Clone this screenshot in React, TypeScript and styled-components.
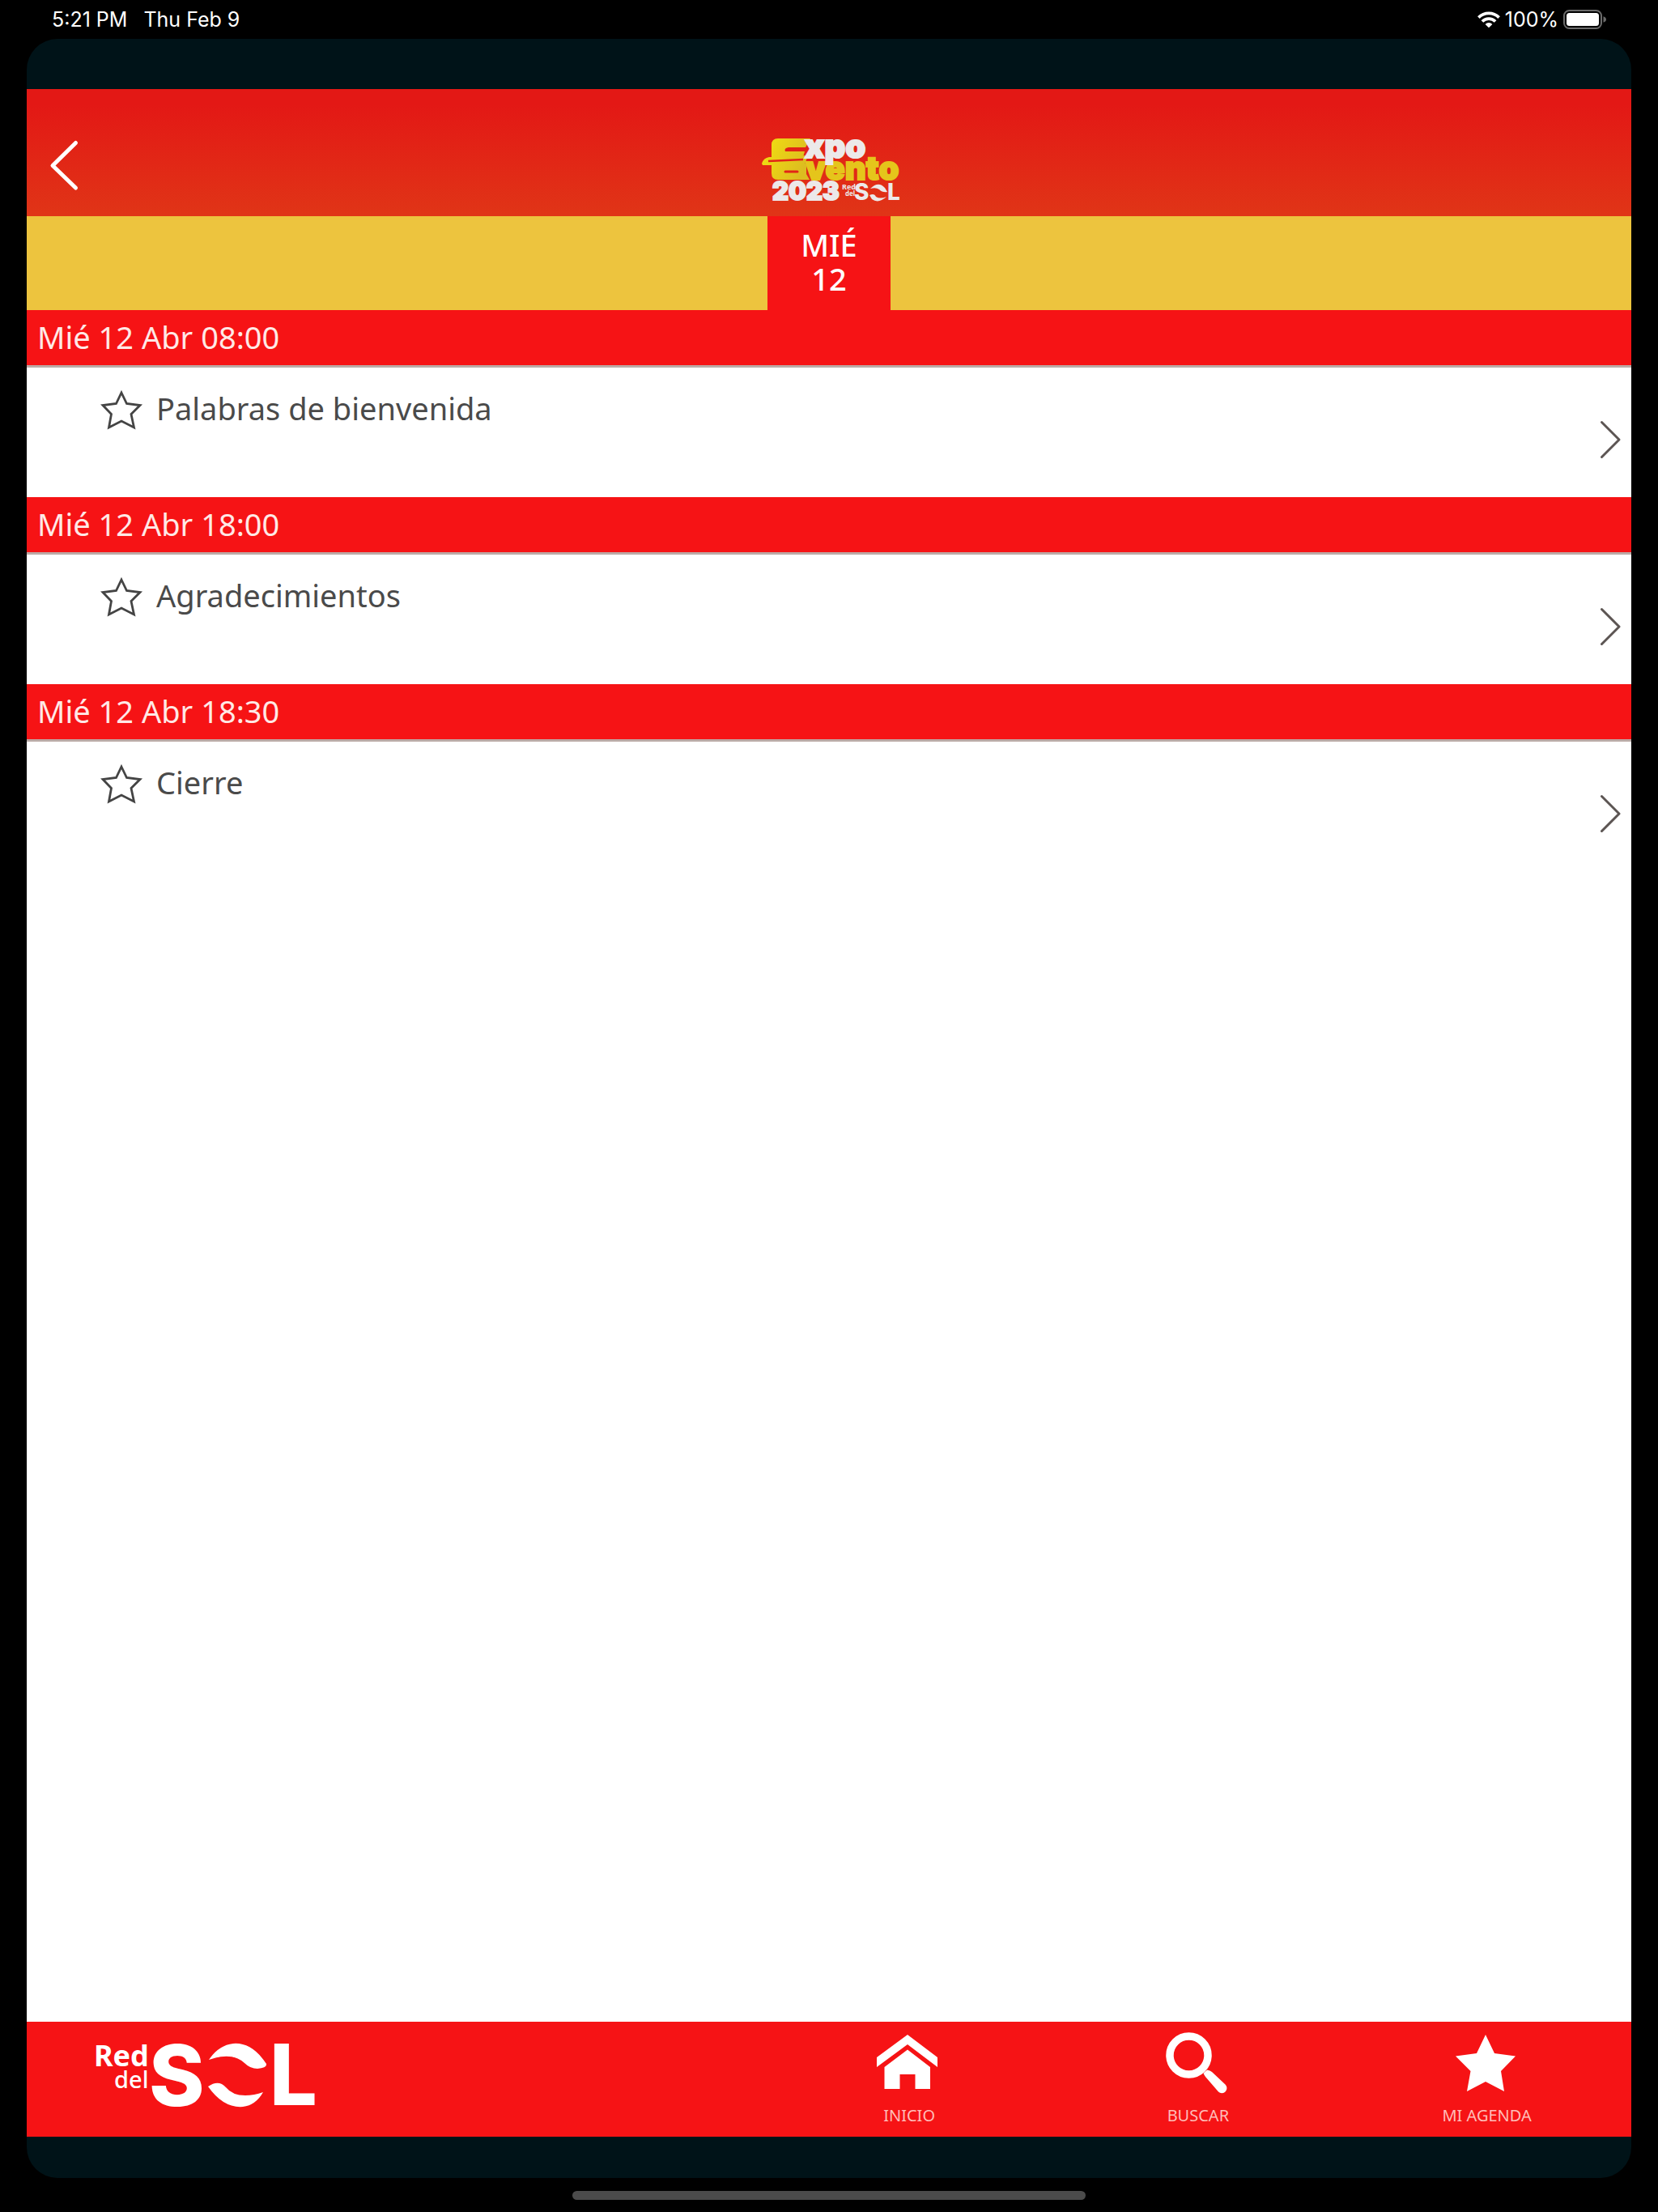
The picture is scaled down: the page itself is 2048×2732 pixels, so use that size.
import React from "react";
import styled, { createGlobalStyle } from "styled-components";

const red = "#f61315";
const textFont = `"Noto Sans", "Open Sans", sans-serif`;

const GlobalStyle = createGlobalStyle`
  * { box-sizing: border-box; }
  body { margin: 0; background: #000; font-family: ${textFont}; }
  a { color: inherit; text-decoration: none; }
  button { border: 0; padding: 0; background: none; color: inherit; font: inherit; cursor: pointer; }
  h2 { margin: 0; }
  svg { display: block; overflow: visible; }
`;

const Screen = styled.div`
  min-height: 100vh;
  display: flex;
  flex-direction: column;
  background: #000;
`;

const StatusBar = styled.div`
  height: 48px;
  padding: 0 64px;
  display: flex;
  align-items: center;
  justify-content: space-between;
  color: #fff;
  font: 400 25px/48px Inter, sans-serif;
`;

const StatusGroup = styled.div<{ $gap: number }>`
  display: flex;
  align-items: center;
  gap: ${(p) => p.$gap}px;
`;

const Panel = styled.div`
  flex: 1;
  margin: 0 33px;
  padding: 62px 0 51px;
  display: flex;
  flex-direction: column;
  border-radius: 38px;
  background: #001318;
`;

const Header = styled.header`
  height: 157px;
  padding: 58px 28px 0;
  display: grid;
  grid-template-columns: 1fr auto 1fr;
  align-items: start;
  background: linear-gradient(#e31815, #e31815 12%, #e03517);
`;

const BackButton = styled.button`
  justify-self: start;
  && {
    padding-top: 5px;
  }
`;

const DayTabs = styled.nav`
  display: flex;
  justify-content: center;
  background: #edc43e;
`;

const DayTab = styled.button`
  && {
    width: 152px;
    height: 116px;
    padding: 14px 0 18px;
    background: ${red};
    color: #fff;
    font-size: 38px;
    line-height: 42px;
    font-weight: 500;
  }
`;

const DayLine = styled.span`
  display: block;
`;

const Agenda = styled.main`
  flex: 1;
  background: #fff;
`;

const SlotTitle = styled.h2`
  height: 71px;
  padding: 0 13px;
  border-bottom: 3px solid #bcaaa6;
  background: ${red};
  color: #ffe9e6;
  font-size: 38px;
  line-height: 66px;
  font-weight: 400;
`;

const SessionRow = styled.div`
  height: 160px;
  padding: 18px 13px 0 92px;
  display: flex;
  align-items: flex-start;
  gap: 18px;
  color: #4a4a4a;
`;

const FavoriteButton = styled.button`
  && {
    padding-top: 10px;
  }
`;

const SessionLink = styled.a`
  flex: 1;
  display: flex;
  justify-content: space-between;
  font-size: 38px;
  line-height: 64px;
  font-weight: 400;
`;

const Chevron = styled.svg`
  margin-top: 46px;
`;

const BottomBar = styled.footer`
  height: 142px;
  display: flex;
  background: ${red};
`;

const Brand = styled.a`
  flex: 1;
  padding: 18px 0 0 77px;
`;

const BottomNav = styled.nav`
  width: 54%;
  display: grid;
  grid-template-columns: repeat(3, 1fr);
`;

const NavLink = styled.a`
  padding-top: 13px;
  display: flex;
  flex-direction: column;
  align-items: center;
  gap: 15px;
  color: #ffbdb8;
  font-size: 20px;
  line-height: 24px;
  font-weight: 400;
`;

const HomeIndicatorArea = styled.div`
  height: 42px;
  padding-top: 16px;
  display: flex;
  justify-content: center;
`;

const HomeIndicator = styled.div`
  width: 31%;
  height: 11px;
  border-radius: 6px;
  background: #4b4b4b;
`;

const WifiIcon = () => (
  <svg width="28" height="21" viewBox="0 0 28 21" fill="none" stroke="#fff" strokeWidth="3.8">
    <path d="M1.4 7.6A18 18 0 0 1 26.6 7.6" />
    <path d="M5.9 12.5A11.6 11.6 0 0 1 22.1 12.5" />
    <path d="M14 20.3L9.6 15.9A6.2 6.2 0 0 1 18.4 15.9Z" fill="#fff" stroke="none" />
  </svg>
);

const BatteryIcon = () => (
  <svg width="53" height="24" viewBox="0 0 53 24">
    <rect x="1" y="1" width="46" height="22" rx="6.5" fill="none" stroke="#6b6b6b" strokeWidth="2" />
    <rect x="4" y="4" width="40" height="16" rx="3.5" fill="#fff" />
    <path d="M49.5 8.2q3.5 1.3 3.5 3.8t-3.5 3.8z" fill="#6b6b6b" />
  </svg>
);

const EventLogo = () => (
  <svg width="180" height="84" viewBox="0 0 180 84" role="img" aria-label="Expo Evento 2023 Red del SOL">
    <defs>
      <linearGradient id="gold" x1="0" y1="0" x2="1" y2="0.4">
        <stop offset="0" stopColor="#f3e010" />
        <stop offset="1" stopColor="#dcbc20" />
      </linearGradient>
    </defs>
    <g fontFamily="Inter, sans-serif" fontWeight="900">
      <text x="61" y="54" fontSize="40" fill="#e5c51b" stroke="#e5c51b" strokeWidth="2">vento</text>
      <path
        fill="url(#gold)"
        d="M19 11Q19 3 27 3H67L61 14H40Q34 15 36 19H60L58 26H19ZM7 34Q9 27 16 26L64 24L60 35L8 36ZM19 34H62V47L66 54H27Q19 54 19 46Z"
      />
      <path d="M15 31L58 29" stroke="#e22417" strokeWidth="2.5" />
      <path d="M36 44H51" stroke="#e22417" strokeWidth="3" strokeLinecap="round" />
      <text x="60" y="27" fontSize="40" fill="#ece9ea" stroke="#ece9ea" strokeWidth="2">xpo</text>
      <text x="20" y="79" fontSize="31" fill="#ece9ea" stroke="#ece9ea" strokeWidth="2">2023</text>
      <text x="121" y="79" fontSize="28" fontWeight="800" fill="#ece9ea">S</text>
      <text x="162" y="79" fontSize="28" fontWeight="800" fill="#ece9ea">L</text>
    </g>
    <g fontFamily={textFont} fontWeight="700" fill="#ece9ea">
      <text x="106" y="66" fontSize="9">Red</text>
      <text x="110" y="74" fontSize="8">del</text>
    </g>
    <path
      fill="#ece9ea"
      d="M141 65Q151 55 159 64L162 69Q156 70 152 66Q148 63 141 65ZM140 73Q146 70 148 75Q153 78 161 75Q151 84 143 78Z"
    />
  </svg>
);

const SolLogo = () => (
  <svg width="290" height="95" viewBox="0 0 290 95" fill="#fff" role="img" aria-label="Red del SOL">
    <g fontFamily={textFont}>
      <text x="6" y="37" fontSize="36" fontWeight="700">Red</text>
      <text x="31" y="64" fontSize="29" fontWeight="500">del</text>
    </g>
    <g fontFamily="Inter, sans-serif" fontWeight="800">
      <text x="74" y="86" fontSize="104">S</text>
      <text x="223" y="85" fontSize="104">L</text>
    </g>
    <path d="M148 29Q160 11 178 9Q201 7 219 34Q220 39 208 40Q199 40 192 33Q177 19 148 29Z" />
    <path d="M147 62Q160 53 169 63Q177 73 193 73Q204 73 215 69Q206 85 190 87Q166 89 147 62Z" />
  </svg>
);

const HomeIcon = () => (
  <svg width="76" height="76" viewBox="2 0 76 76" fill="#fff">
    <path d="M38 3L75 31V43L38 15L0 43V31Z" />
    <path d="M38 21.5L66 43V70H47.5V52H28.5V70H9.5V43Z" />
  </svg>
);

const SearchIcon = () => (
  <svg width="76" height="76" viewBox="2 0 76 76">
    <circle cx="28.5" cy="28.5" r="23.5" fill="none" stroke="#fff" strokeWidth="9.5" />
    <path d="M51 46.5Q55 47 57 49L73.5 64.5A6 6 0 0 1 65 73.5L49 55Q47 52 46.5 50.5Z" fill="#fff" />
  </svg>
);

const AgendaIcon = () => (
  <svg width="76" height="76" viewBox="2 0 76 76" fill="#fff">
    <path d="M38 3L49 26L75 29.5L57 48L61 73L38 61L15 73L19.5 48L1 29.5L27 26Z" />
  </svg>
);

const sessions = [
  { time: "Mié 12 Abr 08:00", title: "Palabras de bienvenida" },
  { time: "Mié 12 Abr 18:00", title: "Agradecimientos" },
  { time: "Mié 12 Abr 18:30", title: "Cierre" },
];

const links = [
  { label: "INICIO", icon: <HomeIcon /> },
  { label: "BUSCAR", icon: <SearchIcon /> },
  { label: "MI AGENDA", icon: <AgendaIcon /> },
];

export default function App() {
  return (
    <Screen>
      <GlobalStyle />
      <StatusBar>
        <StatusGroup $gap={20}>
          <span>5:21 PM</span>
          <span>Thu Feb 9</span>
        </StatusGroup>
        <StatusGroup $gap={6}>
          <WifiIcon />
          <span>100%</span>
          <BatteryIcon />
        </StatusGroup>
      </StatusBar>
      <Panel>
        <Header>
          <BackButton aria-label="Volver">
            <svg width="36" height="62" viewBox="0 0 36 62" fill="none" stroke="#fff" strokeWidth="5" strokeLinecap="round" strokeLinejoin="round">
              <path d="M32.5 3.5L4 31.5L32.5 59" />
            </svg>
          </BackButton>
          <EventLogo />
        </Header>
        <DayTabs>
          <DayTab>
            <DayLine>MIÉ</DayLine>
            <DayLine>12</DayLine>
          </DayTab>
        </DayTabs>
        <Agenda>
          {sessions.map((s) => (
            <section key={s.time}>
              <SlotTitle>{s.time}</SlotTitle>
              <SessionRow>
                <FavoriteButton aria-label={"Agregar a mi agenda: " + s.title}>
                  <svg width="50" height="47" viewBox="0 0 50 47" fill="none" stroke="#444" strokeWidth="2.8">
                    <path d="M25 3L31.5 16.5L48 18.5L37 29.5L40.5 46L25 38L9.5 46L12.5 29.5L2 18.5L18.5 16.5Z" />
                  </svg>
                </FavoriteButton>
                <SessionLink href="#">
                  {s.title}
                  <Chevron width="26" height="50" viewBox="0 0 26 50" fill="none" stroke="#5c5553" strokeWidth="3" strokeLinecap="round" strokeLinejoin="round">
                    <path d="M2.5 3.5L24 25L2.5 46.5" />
                  </Chevron>
                </SessionLink>
              </SessionRow>
            </section>
          ))}
        </Agenda>
        <BottomBar>
          <Brand href="#">
            <SolLogo />
          </Brand>
          <BottomNav>
            {links.map((l) => (
              <NavLink href="#" key={l.label}>
                {l.icon}
                {l.label}
              </NavLink>
            ))}
          </BottomNav>
        </BottomBar>
      </Panel>
      <HomeIndicatorArea>
        <HomeIndicator />
      </HomeIndicatorArea>
    </Screen>
  );
}
